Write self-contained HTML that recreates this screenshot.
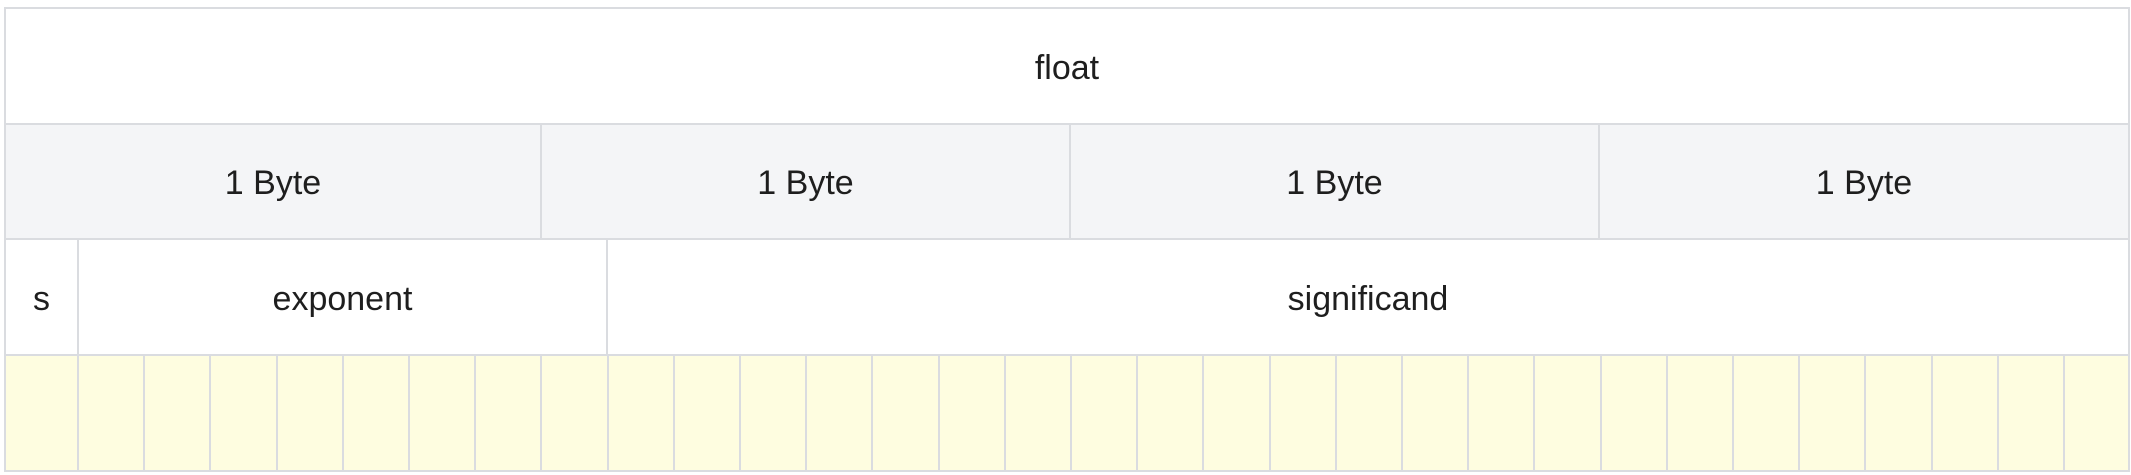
<!DOCTYPE html>
<html><head><meta charset="utf-8"><style>
html,body{margin:0;padding:0;background:#fff;width:2131px;height:475px;overflow:hidden}
.c{position:absolute;box-sizing:border-box;border:2px solid #dadce0;display:flex;align-items:center;justify-content:center;font-family:"Liberation Sans","DejaVu Sans",sans-serif;font-size:34px;color:#1e1e1e;padding-top:4px}
.g{background:#f4f5f7}
.y{background:#fefde0}
</style></head><body>
<div class="c" style="left:4px;top:7px;width:2126px;height:118px">float</div>
<div class="c g" style="left:4px;top:123px;width:538px;height:117px">1 Byte</div>
<div class="c g" style="left:540px;top:123px;width:531px;height:117px">1 Byte</div>
<div class="c g" style="left:1069px;top:123px;width:531px;height:117px">1 Byte</div>
<div class="c g" style="left:1598px;top:123px;width:532px;height:117px">1 Byte</div>
<div class="c" style="left:4px;top:238px;width:75px;height:118px">s</div>
<div class="c" style="left:77px;top:238px;width:531px;height:118px">exponent</div>
<div class="c" style="left:606px;top:238px;width:1524px;height:118px">significand</div>
<div id="bits"></div>
<script>
var b=[4];for(var k=1;k<32;k++)b.push(Math.round(77+(k-1)*66.2));b.push(2128);
var h='';for(var i=0;i<32;i++){h+='<div class="c y" style="left:'+b[i]+'px;top:354px;width:'+(b[i+1]-b[i]+2)+'px;height:118px"></div>';}
document.getElementById('bits').innerHTML=h;
</script>
</body></html>
